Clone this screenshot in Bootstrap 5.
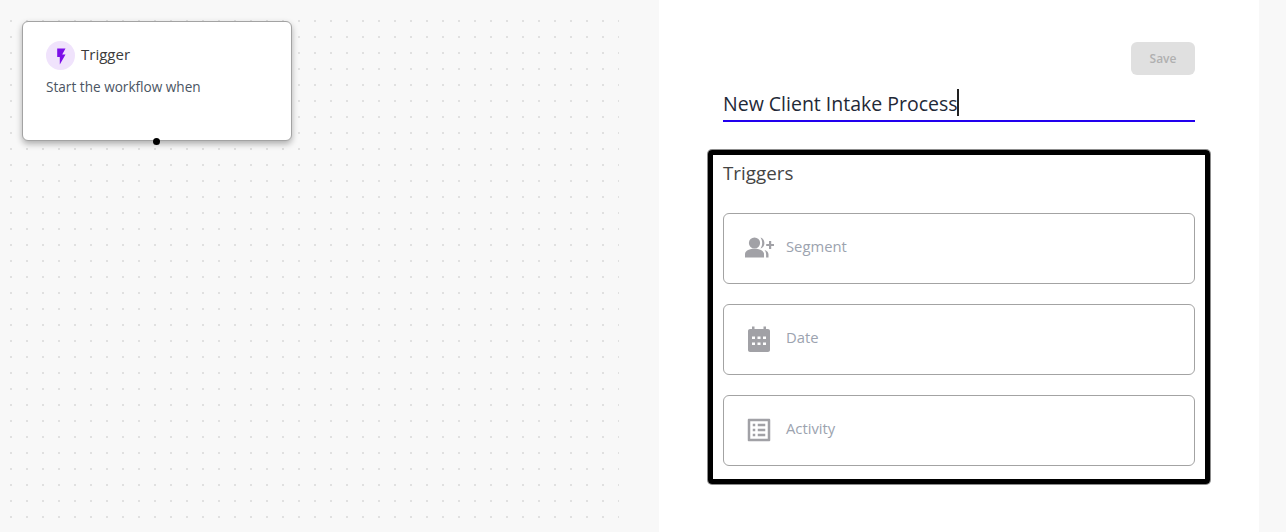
<!DOCTYPE html>
<html lang="en">
<head>
  <meta charset="UTF-8" />
  <meta name="viewport" content="width=device-width, initial-scale=1.0"/>
  <title>Workflow Builder</title>
  <link href="https://cdn.jsdelivr.net/npm/bootstrap@5.3.0/dist/css/bootstrap.min.css" rel="stylesheet"/>
  <style>
    html, body {
      height: 532px;
      overflow: hidden;
    }

    body {
      background: #f8f8f8;
      font-family: "Open Sans", "Liberation Sans", sans-serif;
    }

    .canvas-pane {
      width: 659px;
      height: 532px;
      position: relative;
    }

    /* dot grid sits behind the node */
    .dot-grid {
      position: absolute;
      left: 10px;
      top: 20px;
      width: 609px;
      height: 512px;
      background-image: radial-gradient(circle at 1px 1px, #e0e0e0 1.2px, transparent 1.3px);
      background-size: 16px 16px;
    }

    .trigger-node {
      position: absolute;
      left: 22px;
      top: 21px;
      width: 270px;
      height: 120px;
      background: #fff;
      border: 1px solid #a3a3a3;
      border-radius: 6px;
      box-shadow: 0 3px 6px rgba(0, 0, 0, 0.3);
      padding: 19px 23px;
    }

    .node-handle {
      position: absolute;
      left: 130px;
      bottom: -5px;
      width: 7px;
      height: 7px;
      border-radius: 50%;
      background: #000;
    }

    .bolt-circle {
      width: 29px;
      height: 29px;
      border-radius: 50%;
      background: #f0e3fc;
    }

    .node-title {
      font-size: 15px;
      line-height: 20px;
      color: #3b3b3b;
      margin: 0 0 3px 6px;
    }

    .node-sub {
      font-size: 13.6px;
      line-height: 20px;
      color: #4b5563;
      margin-top: 7px;
    }

    .side-pane {
      width: 600px;
      height: 532px;
      background: #fff;
      padding: 42px 64px 0 49px;
    }

    .save-btn {
      width: 64px;
      height: 33px;
      background: #e0e0e0;
      border: 0;
      border-radius: 6px;
      color: #b0b0b0;
      font-size: 12px;
      font-weight: 600;
      padding: 0;
    }

    .title-field {
      margin: 14px 0 0 15px;
      height: 33px;
      border-bottom: 2px solid #2200ee;
      font-size: 19.5px;
      line-height: 29px;
      color: #1f2937;
    }

    .caret-bar {
      display: inline-block;
      width: 2px;
      height: 27px;
      background: #222;
      vertical-align: top;
      margin-left: -1px;
    }

    .trigger-box {
      margin-top: 28px;
      height: 334px;
      width: 502px;
      border: 5px solid #000;
      border-radius: 4px;
      box-shadow: 0 0 0 1px rgba(0, 0, 0, 0.45);
      padding: 5px 10px 0 10px;
    }

    .box-heading {
      font-size: 18.8px;
      line-height: 26px;
      color: #444;
      margin-bottom: 27px;
    }

    .option-row {
      height: 70.5px;
      margin-bottom: 20.5px;
      border: 1px solid #a3a3a3;
      border-radius: 6px;
      padding-left: 20px;
      font-size: 14.8px;
      color: #9ca3af;
    }

    .option-row span {
      margin-bottom: 4px;
    }

    .option-icon {
      width: 30px;
      height: 30px;
      margin-right: 12px;
      fill: #a1a1a6;
    }
  </style>
</head>
<body>
  <div class="d-flex">
    <div class="canvas-pane">
      <div class="dot-grid"></div>
      <div class="trigger-node">
        <div class="d-flex align-items-center">
          <div class="bolt-circle d-flex align-items-center justify-content-center">
            <svg width="12" height="19" viewBox="0 0 12 19"><path d="M2.200 2.500h8.300L7.200 8.500h3.300L4.800 18.500V11H2.200z" fill="#7c10e8"/></svg>
          </div>
          <div class="node-title">Trigger</div>
        </div>
        <div class="node-sub">Start the workflow when</div>
        <div class="node-handle"></div>
      </div>
    </div>

    <div class="side-pane">
      <div class="d-flex justify-content-end">
        <button type="button" class="save-btn" disabled>Save</button>
      </div>
      <div class="title-field">New Client Intake Process<span class="caret-bar"></span></div>

      <div class="trigger-box">
        <div class="box-heading">Triggers</div>

        <div class="option-row d-flex align-items-center">
          <svg class="option-icon" viewBox="0 0 30 30">
            <circle cx="10.500" cy="10" r="5.600"/>
            <path d="M1 24.500v-3.500C1 17.500 6 15.800 10.500 15.800S20 17.500 20 21v3.500z"/>
            <path d="M16.500 4.500c2.700.8 3.900 3 3.900 5.500s-1.200 4.700-3.900 5.500c1-1.500 1.700-3.400 1.700-5.500s-.7-4-1.700-5.500zM20.500 17c2.700.8 4 2.200 4 4.500v3h-2.400v-3c0-1.800-.5-3.400-1.600-4.500z"/>
            <path d="M25 8h2.200v2.900H30v2.200h-2.800V16H25v-2.900h-2.800v-2.200H25z"/>
          </svg>
          <span>Segment</span>
        </div>

        <div class="option-row d-flex align-items-center">
          <svg class="option-icon" viewBox="0 0 30 30">
            <path d="M8 2.500h2.500V5h9V2.500H22V5h2c1.100 0 2 .9 2 2v19c0 1.100-.9 2-2 2H6c-1.100 0-2-.9-2-2V7c0-1.100.9-2 2-2h2z"/>
            <path fill="#fff" d="M8 12.500h3V15H8zm5.500 0h3V15h-3zm5.500 0h3V15h-3zM8 18.500h3V21H8zm5.500 0h3V21h-3zm5.500 0h3V21h-3z"/>
          </svg>
          <span>Date</span>
        </div>

        <div class="option-row d-flex align-items-center">
          <svg class="option-icon" viewBox="0 0 24 24">
            <path d="M19 5v14H5V5h14m1.100-2H3.900c-.5 0-.9.400-.9.900v16.200c0 .4.400.9.900.9h16.200c.4 0 .9-.5.900-.9V3.900c0-.5-.5-.9-.9-.9zM11 7h6v2h-6V7zm0 4h6v2h-6v-2zm0 4h6v2h-6zM7 7h2v2H7zm0 4h2v2H7zm0 4h2v2H7z"/>
          </svg>
          <span>Activity</span>
        </div>
      </div>
    </div>
  </div>

  <script src="https://cdn.jsdelivr.net/npm/bootstrap@5.3.0/dist/js/bootstrap.bundle.min.js"></script>
</body>
</html>
